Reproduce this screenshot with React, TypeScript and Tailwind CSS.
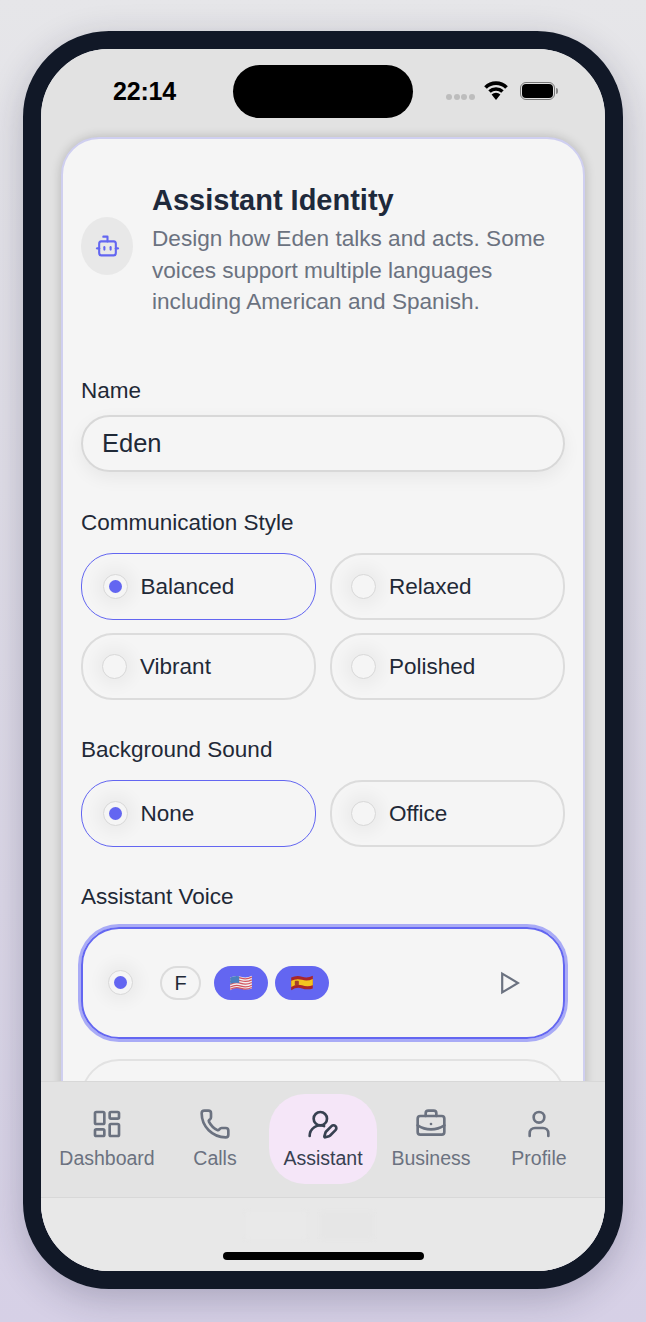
import { Bot, LayoutDashboard, Phone, UserRoundPen, BriefcaseBusiness, User } from "lucide-react";

function Radio({ on }: { on?: boolean }) {
  return (
    <span className="flex h-[25px] w-[25px] shrink-0 items-center justify-center rounded-full border-[1.5px] border-[#d8d8d8] bg-[#f5f5f5] shadow-[0_0_16px_7px_rgba(0,0,0,0.045)]">
      {on && <span className="h-[13px] w-[13px] rounded-full bg-[#6366f1]" />}
    </span>
  );
}

function Option({ label, on }: { label: string; on?: boolean }) {
  return (
    <div className={`flex h-[67px] items-center gap-[13px] rounded-[32px] pt-[1px] text-[22.5px] text-[#1f2937] ${on ? "border-[1.5px] border-[#6366f1] pl-[20.5px]" : "border-2 border-[#dcdcdc] pl-[19px]"}`}>
      <Radio on={on} />
      <span>{label}</span>
    </div>
  );
}

function UsFlag() {
  return (
    <svg width="24" height="18" viewBox="0 0 26 20">
      <path d="M1 4 Q7 1 13 3 T25 2 V16 Q19 18 13 16 T1 18 Z" fill="#f4f0f0" />
      <path d="M1 5.5 Q7 2.5 13 4.5 T25 3.5 M1 8.5 Q7 5.5 13 7.5 T25 6.5 M1 11.5 Q7 8.5 13 10.5 T25 9.5 M1 14.5 Q7 11.5 13 13.5 T25 12.5 M1 17 Q7 14 13 16 T25 15" fill="none" stroke="#d2555f" strokeWidth="1.4" />
      <path d="M1 4 Q6 1.6 11 2.5 V10 Q6 9 1 11 Z" fill="#4a7fc0" />
    </svg>
  );
}

function EsFlag() {
  return (
    <svg width="24" height="18" viewBox="0 0 26 20">
      <path d="M1 4 Q7 1 13 3 T25 2 V16 Q19 18 13 16 T1 18 Z" fill="#a8262c" />
      <path d="M1 7.5 Q7 4.5 13 6.5 T25 5.5 V12.5 Q19 14.5 13 12.5 T1 14.5 Z" fill="#f3c420" />
      <rect x="5" y="7.5" width="4.5" height="5" rx="1" fill="#a5432a" />
    </svg>
  );
}

function NavItem({ icon, label, active }: { icon: React.ReactNode; label: string; active?: boolean }) {
  return (
    <div className={`flex h-[90px] w-[108px] flex-col items-center pt-[14px] ${active ? "rounded-[36px] bg-[#f5e6f8] text-[#374151]" : "text-[#6b7280]"}`}>
      {icon}
      <span className="mt-[4px] whitespace-nowrap text-[19.5px] leading-[28px]">{label}</span>
    </div>
  );
}

export default function App() {
  return (
    <div className="flex h-[1322px] w-[646px] justify-center overflow-hidden bg-gradient-to-b from-[#e6e6e9] to-[#d6d0e6] pt-[31px] font-['Liberation_Sans',Arial,sans-serif]">
      <div className="h-[1258px] w-[600px] rounded-[86px] border-[18px] border-[#111827] shadow-[0_10px_36px_rgba(30,30,60,0.24)]">
        <div className="flex h-full flex-col overflow-hidden rounded-[68px] bg-[#e2e2e2]">
          {/* status bar */}
          <div className="relative flex h-[78px] shrink-0 items-start pl-[72px] pt-[26px]">
            <span className="text-[25px] font-bold leading-[32px] tracking-[-0.2px] text-black">22:14</span>
            <div className="absolute left-[192px] top-[16px] h-[53px] w-[180px] rounded-full bg-black" />
            <div className="absolute left-[405px] top-[45px] flex gap-[1.5px]">
              <span className="h-[6px] w-[6px] rounded-full bg-[#bdbdbd]" />
              <span className="h-[6px] w-[6px] rounded-full bg-[#bdbdbd]" />
              <span className="h-[6px] w-[6px] rounded-full bg-[#bdbdbd]" />
              <span className="h-[6px] w-[6px] rounded-full bg-[#bdbdbd]" />
            </div>
            <svg className="absolute left-[443px] top-[31px]" width="24" height="20" viewBox="0 0 24 20">
              <path d="M1.5 7.5 A15 15 0 0 1 22.5 7.5" fill="none" stroke="#000" strokeWidth="3.8" />
              <path d="M5.5 11.5 A9.5 9.5 0 0 1 18.5 11.5" fill="none" stroke="#000" strokeWidth="3.6" />
              <path d="M12 20 L7.6 14.6 A6.4 6.4 0 0 1 16.4 14.6 Z" fill="#000" />
            </svg>
            <div className="absolute left-[479px] top-[33px] flex items-center">
              <div className="flex h-[18px] w-[35px] items-center justify-center rounded-[6px] border border-[#777]">
                <div className="h-[14px] w-[31px] rounded-[4px] bg-black" />
              </div>
              <div className="ml-[1px] h-[6px] w-[2px] rounded-r-full bg-[#888]" />
            </div>
          </div>

          {/* scrolling content */}
          <div className="min-h-0 flex-1 overflow-hidden px-[20px] pt-[10px]">
            <div className="h-[1100px] rounded-[38px] border-2 border-[#cfcff0] bg-[#f5f5f5] px-[18px] pt-[43px] shadow-[0_0_11px_rgba(0,0,0,0.2)]">
              <div className="flex items-center gap-[19px]">
                <div className="mb-[8px] flex h-[58px] w-[52px] shrink-0 items-center justify-center rounded-[50%] bg-[#e8e8e8] text-[#6366f1]">
                  <Bot width={25} height={28} strokeWidth={2} preserveAspectRatio="none" />
                </div>
                <div>
                  <h1 className="text-[29px] font-bold leading-[36px] text-[#1e293b]">Assistant Identity</h1>
                  <p className="mt-[5px] text-[22.6px] leading-[31.5px] text-[#6b7280]">
                    Design how Eden talks and acts. Some voices support multiple languages including American and Spanish.
                  </p>
                </div>
              </div>

              <div className="mt-[58px] text-[22.5px] leading-[30px] text-[#1f2937]">Name</div>
              <div className="mt-[9px] flex h-[57px] items-center rounded-full border-2 border-[#d8d8d8] pl-[19px] text-[25.5px] text-[#1f2937] shadow-[0_6px_18px_rgba(0,0,0,0.06)]">
                Eden
              </div>

              <div className="mt-[36px] text-[22.5px] leading-[30px] text-[#1f2937]">Communication Style</div>
              <div className="mt-[15px] grid grid-cols-2 gap-x-[14px] gap-y-[13px]">
                <Option label="Balanced" on />
                <Option label="Relaxed" />
                <Option label="Vibrant" />
                <Option label="Polished" />
              </div>

              <div className="mt-[35px] text-[22.5px] leading-[30px] text-[#1f2937]">Background Sound</div>
              <div className="mt-[15px] grid grid-cols-2 gap-x-[14px]">
                <Option label="None" on />
                <Option label="Office" />
              </div>

              <div className="mt-[35px] text-[22.5px] leading-[30px] text-[#1f2937]">Assistant Voice</div>
              <div className="mt-[15px] flex h-[112px] items-center rounded-[38px] border-2 border-[#6366f1] pl-[25px] pr-[43px] ring-[3px] ring-[#a9abf6]">
                <Radio on />
                <span className="ml-[27px] flex h-[34px] w-[41px] items-center justify-center rounded-full border-2 border-[#dcdcdc] text-[20px] text-[#1f2937]">F</span>
                <span className="ml-[13px] flex h-[34px] w-[54px] items-center justify-center rounded-full bg-[#6366f1]"><UsFlag /></span>
                <span className="ml-[7px] flex h-[34px] w-[54px] items-center justify-center rounded-full bg-[#6366f1]"><EsFlag /></span>
                <svg className="ml-auto" width="20" height="24" viewBox="0 0 20 24">
                  <path d="M2.2 2.6 L18 12 L2.2 21.4 Z" fill="none" stroke="#6b7280" strokeWidth="2.2" />
                </svg>
              </div>
              <div className="mt-[20px] h-[112px] rounded-[38px] border-2 border-[#e2e2e2]" />
            </div>
          </div>

          {/* bottom nav */}
          <div className="flex h-[117px] shrink-0 justify-center border-y border-y-[#d8d8d8] bg-[#e3e3e3] pt-[12px]">
            <NavItem icon={<LayoutDashboard size={32} strokeWidth={2} />} label="Dashboard" />
            <NavItem icon={<Phone size={32} strokeWidth={2} />} label="Calls" />
            <NavItem icon={<UserRoundPen size={32} strokeWidth={2} />} label="Assistant" active />
            <NavItem icon={<BriefcaseBusiness size={32} strokeWidth={2} />} label="Business" />
            <NavItem icon={<User size={32} strokeWidth={2} />} label="Profile" />
          </div>

          {/* home indicator */}
          <div className="relative flex h-[73px] shrink-0 items-end justify-center bg-[#e8e8e8] pb-[11px]">
            <div className="absolute left-[205px] top-[14px] h-[27px] w-[60px] bg-[#e9e9e9] blur-[2px]" />
            <div className="absolute left-[280px] top-[14px] h-[27px] w-[52px] bg-[#e6e6e6] blur-[2px]" />
            <div className="relative h-[8px] w-[201px] rounded-full bg-black" />
          </div>
        </div>
      </div>
    </div>
  );
}
